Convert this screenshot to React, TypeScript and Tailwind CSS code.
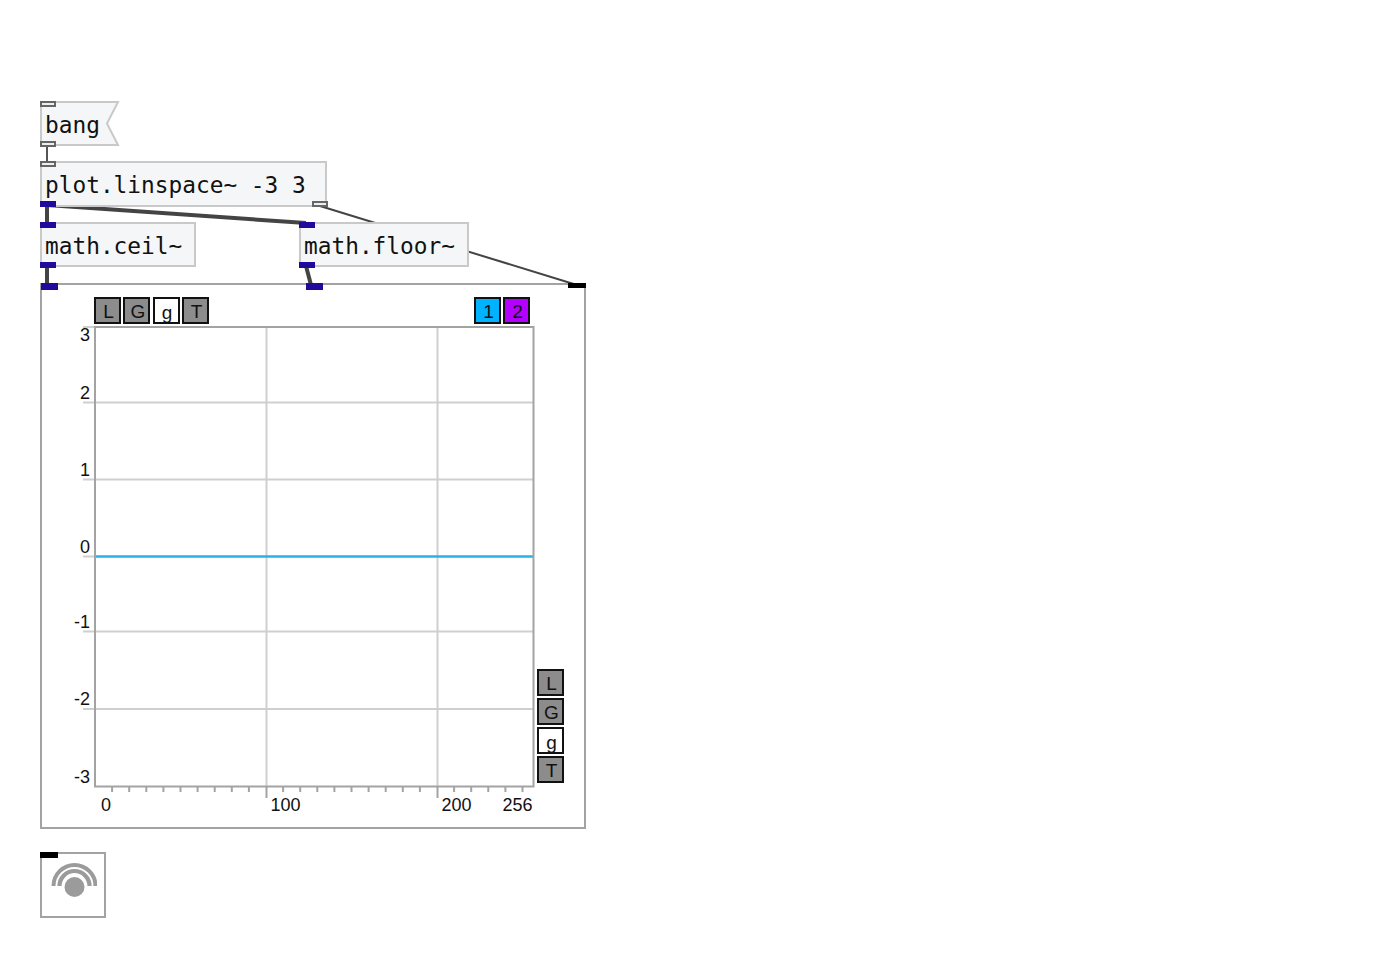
import React from "react";

const mono = "font-['DejaVu_Sans_Mono',monospace] text-[22.8px] leading-none text-[#111]";
const sans = "font-['Liberation_Sans',sans-serif] text-[18px] leading-none text-[#111]";

function Port({ x, y, kind, w = 16, h = 6 }: { x: number; y: number; kind: "msg" | "sig" | "any"; w?: number; h?: number }) {
  const cls =
    kind === "msg"
      ? "bg-[#eeeeee] border-2 border-[#666666]"
      : kind === "sig"
        ? "bg-[#1f0a9c]"
        : "bg-black";
  return <div className={"absolute z-20 " + cls} style={{ left: x, top: y, width: w, height: h }} />;
}

function Box({ x, y, w, h = 45, text }: { x: number; y: number; w: number; h?: number; text: string }) {
  return (
    <div
      className={"absolute z-10 flex items-center pl-[3px] pt-[3px] bg-[#f5f6f8] border-2 border-[#c9c9c9] whitespace-pre " + mono}
      style={{ left: x, top: y, width: w, height: h }}
    >
      {text}
    </div>
  );
}

function Btn({ t, bg = "bg-[#8c8c8c]" }: { t: string; bg?: string }) {
  return (
    <div className={"w-[27px] h-[27px] border-2 border-[#111111] flex items-center justify-center font-['Liberation_Sans',sans-serif] text-[19px] leading-none text-[#111] " + bg}>
      <span className={t === "g" ? "translate-x-[1px] translate-y-[2px]" : "translate-x-[1px] translate-y-[1px]"}>{t}</span>
    </div>
  );
}

function Label({ r, l, y, t }: { r?: number; l?: number; y: number; t: string }) {
  return (
    <div className={"absolute z-10 " + sans} style={{ top: y - 9, ...(r !== undefined ? { left: r - 40, width: 40, textAlign: "right" as const } : { left: l }) }}>
      {t}
    </div>
  );
}

const minorTicks: number[] = [];
for (let i = 1; i <= 25; i++) if (i % 10 !== 0) minorTicks.push(95 + i * 17.1);

export default function App() {
  return (
    <div className="relative w-[1384px] h-[957px] bg-white overflow-hidden">
      {/* patch cords */}
      <svg className="absolute left-0 top-0 z-0" width={1384} height={957} fill="none">
        <line x1={47} y1={146} x2={47} y2={162} stroke="#555" strokeWidth={2} />
        <line x1={47} y1={206} x2={47} y2={223} stroke="#444" strokeWidth={4} />
        <line x1={47} y1={205} x2={306} y2={223} stroke="#444" strokeWidth={4} />
        <line x1={47} y1={266} x2={47} y2={285} stroke="#444" strokeWidth={4} />
        <line x1={306} y1={266} x2={311} y2={285} stroke="#444" strokeWidth={4} />
        <line x1={320} y1={206} x2={577} y2={285} stroke="#444" strokeWidth={2} />
      </svg>

      {/* bang message */}
      <svg className="absolute z-10 left-[40px] top-[101px]" width={80} height={46}>
        <polygon points="1,1 78,1 67,22.5 78,44 1,44" fill="#f5f6f8" stroke="#c9c9c9" strokeWidth={2} />
      </svg>
      <div className={"absolute z-10 left-[45px] top-[114px] " + mono}>bang</div>
      <Port x={40} y={101} kind="msg" />
      <Port x={40} y={141} kind="msg" />

      <Box x={40} y={161} w={287} h={46} text="plot.linspace~ -3 3" />
      <Port x={40} y={161} kind="msg" />
      <Port x={40} y={201} kind="sig" />
      <Port x={312} y={201} kind="msg" />

      <Box x={40} y={222} w={156} text="math.ceil~" />
      <Port x={40} y={222} kind="sig" />
      <Port x={40} y={262} kind="sig" />

      <Box x={299} y={222} w={170} text="math.floor~" />
      <Port x={299} y={222} kind="sig" />
      <Port x={299} y={262} kind="sig" />

      {/* plot frame */}
      <div className="absolute z-[5] left-[40px] top-[283px] w-[546px] h-[546px] bg-white border-2 border-[#a3a3a3]" />
      <Port x={41} y={283} kind="sig" w={17} h={7} />
      <Port x={306} y={283} kind="sig" w={17} h={7} />
      <Port x={568} y={283} kind="any" w={18} h={5} />

      {/* plot area */}
      <svg className="absolute z-[6] left-0 top-0" width={1384} height={957} fill="none">
        {[402.5, 479.5, 631.5, 709].map((y) => (
          <line key={y} x1={83} x2={533} y1={y} y2={y} stroke="#cfcfcf" strokeWidth={2} />
        ))}
        <line x1={83} x2={95} y1={327} y2={327} stroke="#cfcfcf" strokeWidth={2} />
        <line x1={83} x2={95} y1={556.5} y2={556.5} stroke="#cfcfcf" strokeWidth={2} />
        {[266.5, 437.5].map((x) => (
          <line key={x} x1={x} x2={x} y1={327} y2={787} stroke="#cfcfcf" strokeWidth={2} />
        ))}
        <line x1={95} x2={533} y1={556.5} y2={556.5} stroke="#22b5e6" strokeWidth={2.5} />
        <rect x={95} y={327} width={438.5} height={459.5} stroke="#a3a3a3" strokeWidth={2} />
        {minorTicks.map((x) => (
          <line key={x} x1={x} x2={x} y1={787} y2={792} stroke="#a3a3a3" strokeWidth={2} />
        ))}
        {[266.5, 437.5].map((x) => (
          <line key={x} x1={x} x2={x} y1={787} y2={798} stroke="#a3a3a3" strokeWidth={2} />
        ))}
      </svg>

      <Label r={90} y={335} t="3" />
      <Label r={90} y={393} t="2" />
      <Label r={90} y={470} t="1" />
      <Label r={90} y={547} t="0" />
      <Label r={90} y={622} t="-1" />
      <Label r={90} y={699} t="-2" />
      <Label r={90} y={777} t="-3" />
      <Label l={101} y={805} t="0" />
      <Label l={270.5} y={805} t="100" />
      <Label l={441.5} y={805} t="200" />
      <Label l={502.5} y={805} t="256" />

      {/* plot buttons */}
      <div className="absolute z-20 left-[94px] top-[297px] flex gap-[2.33px]">
        <Btn t="L" />
        <Btn t="G" />
        <Btn t="g" bg="bg-white" />
        <Btn t="T" />
      </div>
      <div className="absolute z-20 left-[474px] top-[297px] flex gap-[2px]">
        <Btn t="1" bg="bg-[#00b2ff]" />
        <Btn t="2" bg="bg-[#b300ff]" />
      </div>
      <div className="absolute z-20 left-[537px] top-[669px] flex flex-col gap-[2px]">
        <Btn t="L" />
        <Btn t="G" />
        <Btn t="g" bg="bg-white" />
        <Btn t="T" />
      </div>

      {/* speaker toggle */}
      <div className="absolute z-[5] left-[40px] top-[852px] w-[66px] h-[66px] bg-white border-2 border-[#a3a3a3] flex items-center justify-center">
        <svg width={48} height={36} viewBox="0 0 48 36" fill="none" className="shrink-0 translate-y-[-6px]">
          <path d="M4.5 25 A21 21 0 0 1 46.5 25" stroke="#9b9b9b" strokeWidth={4} />
          <path d="M10.5 25 A15 15 0 0 1 40.5 25" stroke="#9b9b9b" strokeWidth={4.2} />
          <circle cx={25.5} cy={26} r={10} fill="#9b9b9b" />
        </svg>
      </div>
      <Port x={40} y={852} kind="any" w={18} />
    </div>
  );
}
